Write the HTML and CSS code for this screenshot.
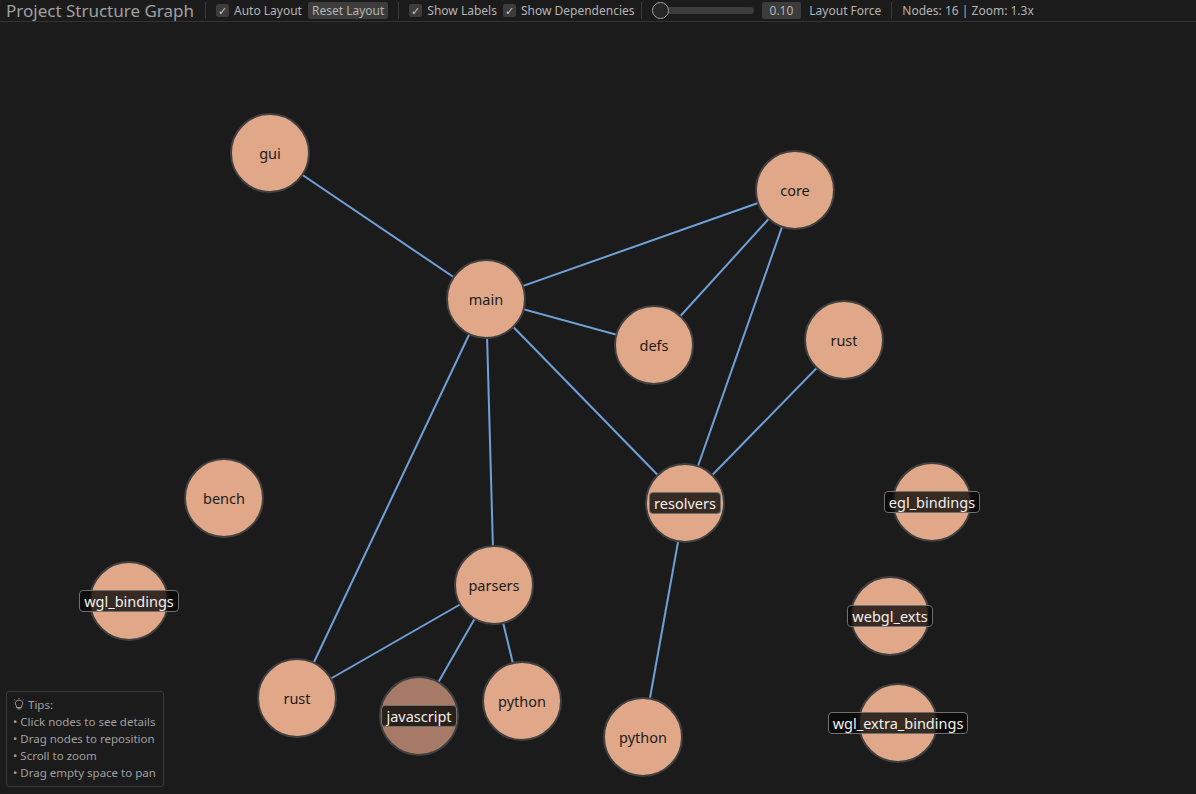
FILE: index.html
```html
<!DOCTYPE html>
<html>
<head>
    <title>Project Structure Graph</title>
    <link rel="stylesheet" href="styles.css">
</head>
<body>
    <div class="toolbar">
        <span class="title">Project Structure Graph</span>
        <span class="sep"></span>
        <label class="check"><span class="box">&#10003;</span>Auto Layout</label>
        <button class="btn">Reset Layout</button>
        <span class="sep"></span>
        <label class="check"><span class="box">&#10003;</span>Show Labels</label>
        <label class="check"><span class="box">&#10003;</span>Show Dependencies</label>
        <span class="sep"></span>
        <div class="slider"><span class="knob"></span></div>
        <span class="value">0.10</span>
        <span class="text">Layout Force</span>
        <span class="sep"></span>
        <span class="text">Nodes: 16 | Zoom: 1.3x</span>
    </div>

    <div class="graph">
        <svg class="edges" width="1196" height="772"></svg>
        <div class="tips">
            <div class="tip-head">
                <svg width="12" height="12" viewBox="0 0 12 12">
                    <path d="M3.2 7.5 C1.6 6 2 2.2 6 2.2 C10 2.2 10.4 6 8.8 7.5 L8.4 9.5 L3.6 9.5 Z" fill="none" stroke="#a0a0a0" stroke-width="1"/>
                    <path d="M4.2 10.8 L7.8 10.8 M6 0 L6 1 M10.5 1.5 L9.8 2.2 M1.5 1.5 L2.2 2.2" stroke="#a0a0a0" stroke-width="1"/>
                </svg>
                Tips:
            </div>
            <div>&bull; Click nodes to see details</div>
            <div>&bull; Drag nodes to reposition</div>
            <div>&bull; Scroll to zoom</div>
            <div>&bull; Drag empty space to pan</div>
        </div>
    </div>

    <script>
        const nodes = [
            { id: 'gui', label: 'gui', x: 270, y: 153 },
            { id: 'core', label: 'core', x: 795, y: 190 },
            { id: 'main', label: 'main', x: 486, y: 299 },
            { id: 'defs', label: 'defs', x: 654, y: 345 },
            { id: 'rust1', label: 'rust', x: 844, y: 340 },
            { id: 'bench', label: 'bench', x: 224, y: 498 },
            { id: 'resolvers', label: 'resolvers', x: 685, y: 503, boxed: true },
            { id: 'egl', label: 'egl_bindings', x: 932, y: 502, boxed: true },
            { id: 'wgl', label: 'wgl_bindings', x: 129, y: 601, boxed: true },
            { id: 'parsers', label: 'parsers', x: 494, y: 585 },
            { id: 'webgl', label: 'webgl_exts', x: 890, y: 616, boxed: true },
            { id: 'rust2', label: 'rust', x: 297, y: 698 },
            { id: 'js', label: 'javascript', x: 419, y: 716, boxed: true, hover: true },
            { id: 'py1', label: 'python', x: 522, y: 701 },
            { id: 'py2', label: 'python', x: 643, y: 737 },
            { id: 'wglx', label: 'wgl_extra_bindings', x: 898, y: 723, boxed: true }
        ];

        const edges = [
            ['gui', 'main'], ['main', 'core'], ['main', 'defs'], ['defs', 'core'],
            ['core', 'resolvers'], ['rust1', 'resolvers'], ['main', 'resolvers'],
            ['main', 'parsers'], ['main', 'rust2'], ['parsers', 'rust2'],
            ['parsers', 'js'], ['parsers', 'py1'], ['resolvers', 'py2']
        ];

        const offsetY = 22;
        const graph = document.querySelector('.graph');
        const svg = document.querySelector('.edges');
        const find = id => nodes.find(n => n.id === id);

        let lines = '';
        edges.forEach(([a, b]) => {
            const n1 = find(a), n2 = find(b);
            lines += `<line x1="${n1.x}" y1="${n1.y - offsetY}" x2="${n2.x}" y2="${n2.y - offsetY}" />`;
        });
        svg.innerHTML = lines;

        nodes.forEach(n => {
            const el = document.createElement('div');
            el.className = 'node' + (n.hover ? ' hover' : '');
            el.style.left = n.x + 'px';
            el.style.top = (n.y - offsetY) + 'px';
            el.innerHTML = `<span class="${n.boxed ? 'label boxed' : 'label'}">${n.label}</span>`;
            graph.appendChild(el);
        });
    </script>
</body>
</html>
```

FILE: styles.css
```css
body {
    margin: 0;
    background-color: #1b1b1b;
    font-family: "Noto Sans", "Open Sans", sans-serif;
    color: #b4b4b4;
    overflow: hidden;
}

.toolbar {
    display: flex;
    align-items: center;
    height: 21px;
    padding: 0 6px;
    border-bottom: 1px solid #333;
    font-size: 12px;
    white-space: nowrap;
}

.title {
    font-size: 17px;
    color: #a0a0a0;
    margin-right: 11px;
}

.sep {
    width: 1px;
    height: 17px;
    background-color: #3a3a3a;
    margin-right: 10px;
}

.check {
    display: flex;
    align-items: center;
    margin-right: 6px;
}

.box {
    width: 13px;
    height: 13px;
    background-color: #3c3c3c;
    border-radius: 2px;
    color: #c8c8c8;
    font-size: 11px;
    line-height: 13px;
    text-align: center;
    margin-right: 5px;
}

.btn {
    background-color: #3c3c3c;
    color: #b4b4b4;
    border: none;
    border-radius: 2px;
    font-family: inherit;
    font-size: 12px;
    height: 17px;
    padding: 0 4px;
    margin-right: 10px;
}

.slider {
    position: relative;
    width: 102px;
    height: 7px;
    background-color: #3c3c3c;
    border-radius: 4px;
    margin-left: 0;
    margin-right: 8px;
}

.knob {
    position: absolute;
    left: 0;
    top: -5px;
    width: 15px;
    height: 15px;
    border: 1.5px solid #a0a0a0;
    border-radius: 50%;
    background-color: #262626;
}

.value {
    background-color: #3c3c3c;
    border-radius: 2px;
    padding: 0 8px;
    height: 17px;
    line-height: 17px;
    margin-right: 8px;
}

.text {
    margin-right: 10px;
}

.graph {
    position: relative;
    height: 772px;
}

.edges {
    position: absolute;
    left: 0;
    top: 0;
}

.edges line {
    stroke: #6fa0d8;
    stroke-width: 2;
}

.node {
    position: absolute;
    width: 76px;
    height: 76px;
    margin: -40px 0 0 -40px;
    border: 2px solid #404040;
    border-radius: 50%;
    background-color: #e0a888;
    display: flex;
    justify-content: center;
    align-items: center;
}

.node.hover {
    background-color: #a67a66;
}

.label {
    font-size: 14.5px;
    color: #1c1c1c;
    white-space: nowrap;
}

.label.boxed {
    color: #f0f0f0;
    background-color: rgba(8, 6, 5, 0.78);
    border: 1px solid #707070;
    border-radius: 4px;
    padding: 0 4px;
    line-height: 20px;
}

.tips {
    position: absolute;
    left: 6px;
    bottom: 7px;
    padding: 4px 7px 5px 6px;
    border: 1px solid #3a3a3a;
    border-radius: 3px;
    font-size: 11.5px;
    line-height: 17px;
    color: #a0a0a0;
    white-space: nowrap;
}

.tip-head svg {
    vertical-align: -1px;
}
```
